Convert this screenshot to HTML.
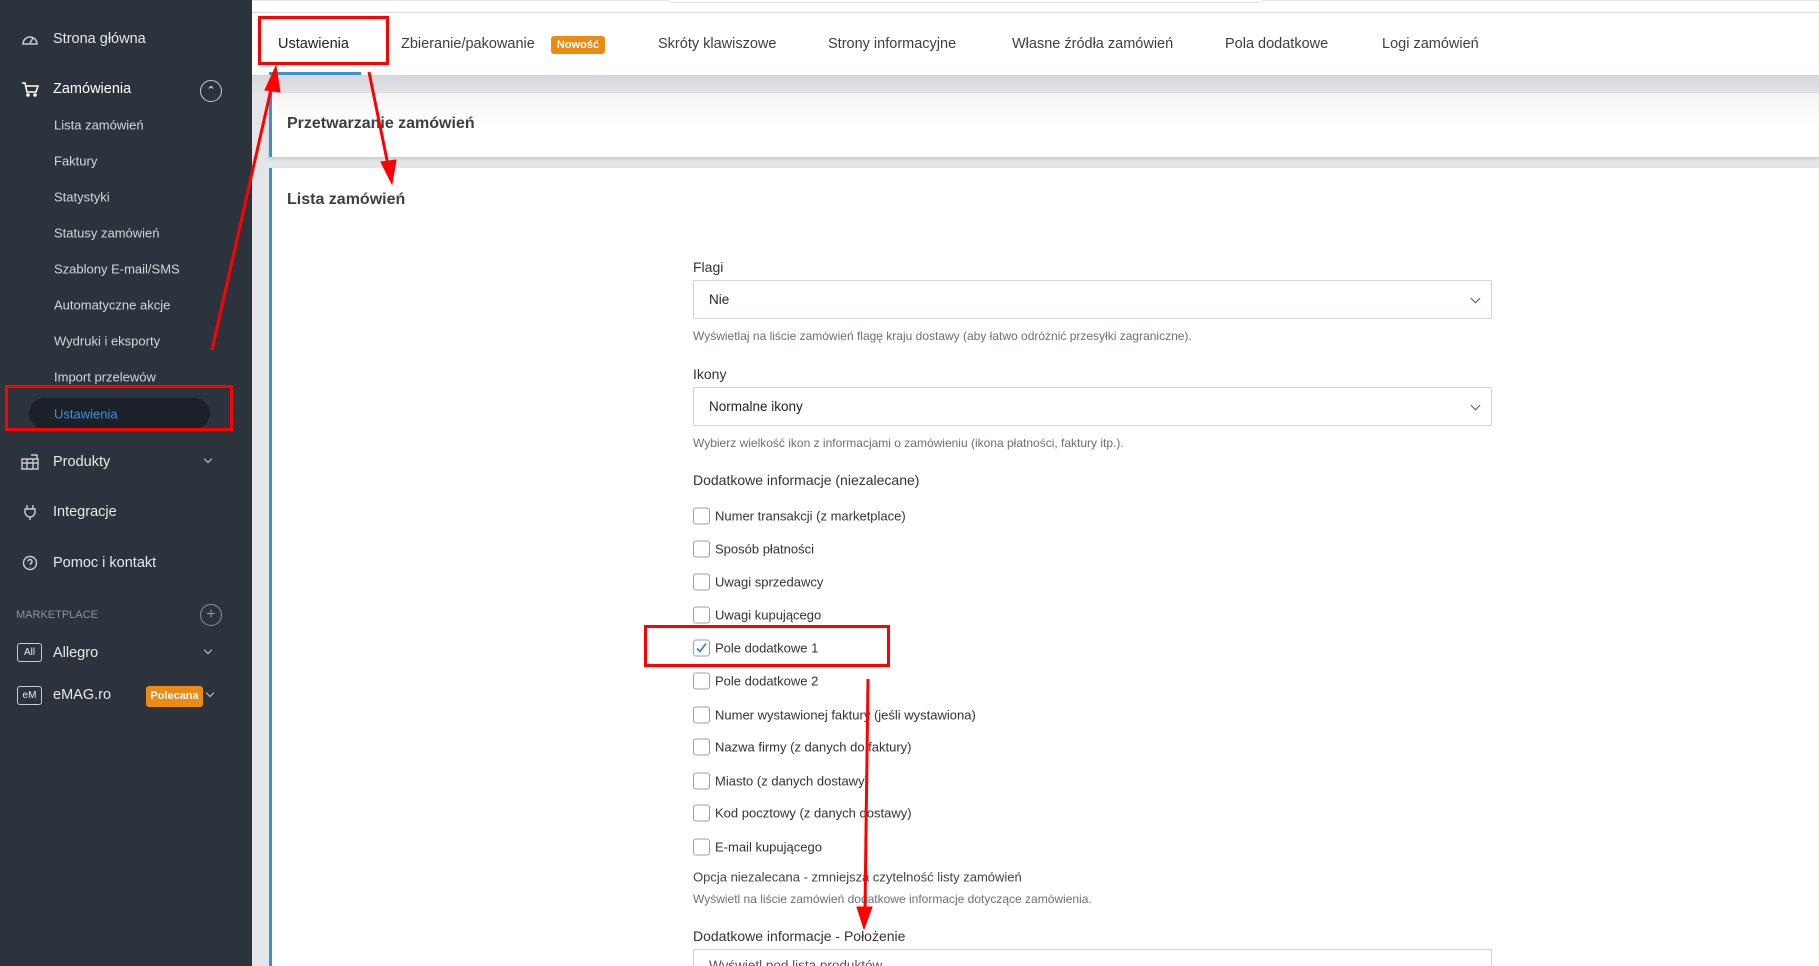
<!DOCTYPE html>
<html style="overflow:hidden;width:1819px;height:966px"><head><meta charset="utf-8"><style>
*{box-sizing:border-box;margin:0;padding:0}
body{width:1819px;height:966px;overflow:hidden;background:#e4e5e8;font-family:"Liberation Sans",sans-serif;position:relative}
.sb{position:absolute;left:0;top:0;width:252px;height:966px;background:#2d333c}
.sb .it{position:absolute;left:53px;color:#e6e8eb;font-size:14.5px;transform:translateY(-50%)}
.sb .sub{position:absolute;left:54px;color:#d3d6da;font-size:13px;transform:translateY(-50%)}
.ic{position:absolute;left:21px;transform:translateY(-50%)}
.top{position:absolute;left:252px;top:0;right:0;height:75px;background:#fff;border-top:1px solid #e6e7ea}
.topline{position:absolute;left:252px;right:0;top:12px;height:1px;background:#d8d9dd}
.tab{position:absolute;top:44px;transform:translateY(-50%);font-size:14.5px;color:#3a3f46}
.card{position:absolute;left:269px;right:0;background:#fff;border-left:3px solid #3a8fd6}
.lbl{position:absolute;left:693px;font-size:14px;color:#333;transform:translateY(-50%)}
.help{position:absolute;left:693px;font-size:12px;color:#6b7078;transform:translateY(-50%)}
.sel{position:absolute;left:693px;width:799px;height:39px;border:1px solid #cfd3d8;border-radius:2px;background:#fff;font-size:13.5px;color:#222;padding:11px 15px}
.sel:after{content:"";position:absolute;right:12px;top:14px;width:6px;height:6px;border-right:1.3px solid #555;border-bottom:1.3px solid #555;transform:rotate(45deg)}
.cb{position:absolute;left:693px;width:17px;height:17px;border:1px solid #9aa0a7;border-radius:3px;transform:translateY(-50%)}
.cbl{position:absolute;left:715px;font-size:13px;color:#333;transform:translateY(-50%)}
.red{position:absolute;border:3px solid #f00}
</style></head><body>
<div class="sb">
 <svg class="ic" style="top:39px" width="18" height="16" viewBox="0 0 18 16" fill="none" stroke="#c9cdd2" stroke-width="1.5"><path d="M2 13a7 7 0 1 1 14 0z"/><path d="M9 12l3-5"/></svg>
 <div class="it" style="top:39px">Strona główna</div>
 <svg class="ic" style="top:89px" width="18" height="16" viewBox="0 0 18 16" fill="none" stroke="#fff" stroke-width="1.6"><path d="M1 2h3l2 9h9l2-6H5"/><circle cx="7" cy="14" r="1"/><circle cx="14" cy="14" r="1"/></svg>
 <div class="it" style="top:89px;color:#fff">Zamówienia</div>
 <div style="position:absolute;left:200px;top:80px;width:22px;height:22px;border:1.3px solid #c9cdd2;border-radius:50%;color:#fff;font-size:11px;text-align:center;line-height:20px">⌃</div>
 <div class="sub" style="top:125px">Lista zamówień</div>
 <div class="sub" style="top:161px">Faktury</div>
 <div class="sub" style="top:197px">Statystyki</div>
 <div class="sub" style="top:233px">Statusy zamówień</div>
 <div class="sub" style="top:269px">Szablony E-mail/SMS</div>
 <div class="sub" style="top:305px">Automatyczne akcje</div>
 <div class="sub" style="top:341px">Wydruki i eksporty</div>
 <div class="sub" style="top:377px">Import przelewów</div>
 <div style="position:absolute;left:29px;top:398px;width:181px;height:31px;border-radius:16px;background:#1c2129"></div>
 <div class="sub" style="top:414px;color:#3d8fe0">Ustawienia</div>
 <svg class="ic" style="top:462px" width="18" height="16" viewBox="0 0 18 16" fill="none" stroke="#c9cdd2" stroke-width="1.4"><path d="M1 15V5h16v10zM1 9h16M6 5v10M12 5v10M10 1h6v4"/></svg>
 <div class="it" style="top:462px">Produkty</div>
 <div style="position:absolute;left:205px;top:456px;width:6px;height:6px;border-right:1.3px solid #c9cdd2;border-bottom:1.3px solid #c9cdd2;transform:rotate(45deg)"></div>
 <svg class="ic" style="top:512px" width="18" height="16" viewBox="0 0 18 16" fill="none" stroke="#c9cdd2" stroke-width="1.4"><path d="M6 1v4M12 1v4M4 5h10v3a5 5 0 0 1-10 0zM9 13v3"/></svg>
 <div class="it" style="top:512px">Integracje</div>
 <svg class="ic" style="top:563px" width="18" height="16" viewBox="0 0 18 16" fill="none" stroke="#c9cdd2" stroke-width="1.4"><circle cx="9" cy="8" r="6.5"/><path d="M7 6.5a2 2 0 1 1 2.5 2V10M9 12v.5"/></svg>
 <div class="it" style="top:563px">Pomoc i kontakt</div>
 <div style="position:absolute;left:16px;top:609px;font-size:11px;color:#8b929b">MARKETPLACE</div>
 <div style="position:absolute;left:200px;top:604px;width:22px;height:22px;border:1.3px solid #8b929b;border-radius:50%;color:#8b929b;font-size:16px;text-align:center;line-height:19px">+</div>
 <div style="position:absolute;left:17px;top:643px;width:25px;height:19px;border:1px solid #c9cdd2;border-radius:3px;color:#e6e8eb;font-size:10px;text-align:center;line-height:17px">All</div>
 <div class="it" style="top:653px">Allegro</div>
 <div style="position:absolute;left:205px;top:647px;width:6px;height:6px;border-right:1.3px solid #c9cdd2;border-bottom:1.3px solid #c9cdd2;transform:rotate(45deg)"></div>
 <div style="position:absolute;left:17px;top:686px;width:25px;height:19px;border:1px solid #c9cdd2;border-radius:3px;color:#e6e8eb;font-size:10px;text-align:center;line-height:17px">eM</div>
 <div class="it" style="top:695px">eMAG.ro</div>
 <div style="position:absolute;left:146px;top:686px;width:57px;height:21px;background:#ec8a14;border-radius:3px;color:#fff;font-size:11px;font-weight:bold;text-align:center;line-height:21px">Polecana</div>
 <div style="position:absolute;left:207px;top:690px;width:6px;height:6px;border-right:1.3px solid #c9cdd2;border-bottom:1.3px solid #c9cdd2;transform:rotate(45deg)"></div>
</div>
<div class="top"></div>
<div class="topline"></div>
<div style="position:absolute;left:667px;top:-8px;width:598px;height:11px;border:1px solid #e0e2e6;border-radius:6px;background:#fff"></div>
<div class="tab" style="left:278px;color:#222">Ustawienia</div>
<div style="position:absolute;left:269px;top:72px;width:92px;height:3px;background:#3a8fd6"></div>
<div class="tab" style="left:401px">Zbieranie/pakowanie</div>
<div style="position:absolute;left:551px;top:36px;width:54px;height:18px;background:#ec8a14;border-radius:3px;color:#fff;font-size:11px;font-weight:bold;text-align:center;line-height:18px">Nowość</div>
<div class="tab" style="left:658px">Skróty klawiszowe</div>
<div class="tab" style="left:828px">Strony informacyjne</div>
<div class="tab" style="left:1012px">Własne źródła zamówień</div>
<div class="tab" style="left:1225px">Pola dodatkowe</div>
<div class="tab" style="left:1382px">Logi zamówień</div>
<div style="position:absolute;left:252px;right:0;top:75px;height:18px;background:linear-gradient(#d6d7db,#e2e3e6)"></div>
<div class="card" style="top:93px;height:64px;background:linear-gradient(#f4f4f5,#fff 50%);box-shadow:0 2px 3px rgba(0,0,0,.12)"></div>
<div style="position:absolute;left:287px;top:124px;transform:translateY(-50%);font-size:16px;color:#3a3f46;font-weight:bold">Przetwarzanie zamówień</div>
<div class="card" style="top:168px;height:798px"></div>
<div style="position:absolute;left:287px;top:200px;transform:translateY(-50%);font-size:16px;color:#3a3f46;font-weight:bold">Lista zamówień</div>

<div class="lbl" style="top:267px">Flagi</div>
<div class="sel" style="top:280px">Nie</div>
<div class="help" style="top:336px">Wyświetlaj na liście zamówień flagę kraju dostawy (aby łatwo odróżnić przesyłki zagraniczne).</div>
<div class="lbl" style="top:374px">Ikony</div>
<div class="sel" style="top:387px">Normalne ikony</div>
<div class="help" style="top:443px">Wybierz wielkość ikon z informacjami o zamówieniu (ikona płatności, faktury itp.).</div>
<div class="lbl" style="top:480px">Dodatkowe informacje (niezalecane)</div>

<div class="cb" style="top:516px"></div><div class="cbl" style="top:516px">Numer transakcji (z marketplace)</div>
<div class="cb" style="top:549px"></div><div class="cbl" style="top:549px">Sposób płatności</div>
<div class="cb" style="top:582px"></div><div class="cbl" style="top:582px">Uwagi sprzedawcy</div>
<div class="cb" style="top:615px"></div><div class="cbl" style="top:615px">Uwagi kupującego</div>
<div class="cb" style="top:648px"><svg width="15" height="15" viewBox="0 0 15 15" style="position:absolute;left:0;top:0"><path d="M3 8l3 3 6-8" fill="none" stroke="#2a7fd6" stroke-width="1.6"/></svg></div><div class="cbl" style="top:648px">Pole dodatkowe 1</div>
<div class="cb" style="top:681px"></div><div class="cbl" style="top:681px">Pole dodatkowe 2</div>
<div class="cb" style="top:715px"></div><div class="cbl" style="top:715px">Numer wystawionej faktury (jeśli wystawiona)</div>
<div class="cb" style="top:747px"></div><div class="cbl" style="top:747px">Nazwa firmy (z danych do faktury)</div>
<div class="cb" style="top:781px"></div><div class="cbl" style="top:781px">Miasto (z danych dostawy)</div>
<div class="cb" style="top:813px"></div><div class="cbl" style="top:813px">Kod pocztowy (z danych dostawy)</div>
<div class="cb" style="top:847px"></div><div class="cbl" style="top:847px">E-mail kupującego</div>
<div class="lbl" style="top:877px;font-size:13px;color:#444">Opcja niezalecana - zmniejsza czytelność listy zamówień</div>
<div class="help" style="top:899px">Wyświetl na liście zamówień dodatkowe informacje dotyczące zamówienia.</div>
<div class="lbl" style="top:936px">Dodatkowe informacje - Położenie</div>
<div class="sel" style="top:949px;height:17px;border-bottom:none;color:#555;overflow:hidden;padding-top:8px">Wyświetl pod listą produktów</div>

<div class="red" style="left:258px;top:16px;width:131px;height:49px"></div>
<div class="red" style="left:5px;top:385px;width:228px;height:46px"></div>
<div class="red" style="left:644px;top:625px;width:246px;height:42px"></div>
<svg style="position:absolute;left:0;top:0" width="1819" height="966">
<g stroke="#f00" stroke-width="3" fill="#f00">
<line x1="212" y1="350" x2="272" y2="85"/><polygon points="276,66 265,90 280,92" stroke-width="1"/>
<line x1="369" y1="72" x2="388" y2="165"/><polygon points="392,184 381,162 396,160" stroke-width="1"/>
<line x1="868" y1="679" x2="865" y2="910"/><polygon points="864,929 857,907 872,907" stroke-width="1"/>
</g></svg>
</body></html>
